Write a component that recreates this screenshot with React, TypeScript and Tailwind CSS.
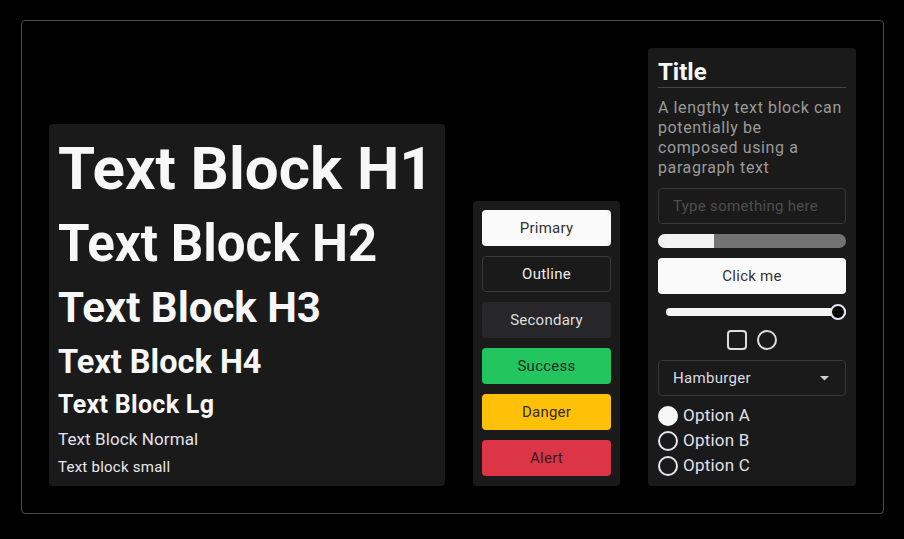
import React from 'react';

const buttons = [
  { label: 'Primary', cls: 'bg-[#fafafa] text-[#333333]' },
  { label: 'Outline', cls: 'bg-[#1a1a1a] text-[#ececec] border border-[#3a3a3a]' },
  { label: 'Secondary', cls: 'bg-[#27272a] text-[#dedede]' },
  { label: 'Success', cls: 'bg-[#22c55e] text-[#1d2b22]' },
  { label: 'Danger', cls: 'bg-[#ffc107] text-[#332b14]' },
  { label: 'Alert', cls: 'bg-[#dc3545] text-[#3a1a1f]' },
];

const options = ['Option A', 'Option B', 'Option C'];

const App: React.FC = () => {
  return (
    <div className="w-[904px] h-[539px] bg-black pl-[21px] pt-[20px] font-['Roboto',sans-serif]">
      <div className="w-[863px] h-[494px] border border-[#4a4a4a] rounded-[4px] p-[27px] flex items-end gap-7">
        {/* typography */}
        <div className="w-[396px] bg-[#1a1a1a] rounded-[4px] px-[9px] pt-[9px] pb-[10px] flex flex-col gap-[9px] text-[#f7f7f7] leading-[1.2]">
          <div className="text-[60px] font-bold">Text Block H1</div>
          <div className="text-[51px] leading-[60px] font-bold">Text Block H2</div>
          <div className="text-[42px] font-bold">Text Block H3</div>
          <div className="text-[32.5px] leading-[38px] font-bold">Text Block H4</div>
          <div className="text-[25px] leading-[30px] font-bold tracking-[0.3px]">Text Block Lg</div>
          <div className="text-[17px] text-[#e2e2ea] tracking-[0.1px]">Text Block Normal</div>
          <div className="text-[15px] text-[#e8e8ee] tracking-[0.25px]">Text block small</div>
        </div>

        {/* buttons */}
        <div className="w-[147px] bg-[#1a1a1a] rounded-[4px] px-[9px] pt-[9px] pb-[10px] flex flex-col gap-[10px]">
          {buttons.map((b) => (
            <button
              key={b.label}
              className={`h-[36px] rounded-[4px] text-[15px] tracking-[0.25px] flex items-center justify-center ${b.cls}`}
            >
              {b.label}
            </button>
          ))}
        </div>

        {/* form card */}
        <div className="w-[208px] bg-[#1a1a1a] rounded-[4px] p-[10px] flex flex-col gap-[10px]">
          <div className="h-[30px] leading-[29px] text-[24px] font-bold text-[#f7f7f7] border-b border-[#464646]">Title</div>
          <p className="text-[16px] leading-[20px] tracking-[0.6px] text-[#9a9a9a]">
            A lengthy text block can potentially be composed using a paragraph text
          </p>
          <input
            className="h-[36px] w-full rounded-[4px] border border-[#383838] bg-transparent px-[14px] text-[15px] tracking-[0.3px] text-[#dddddd] placeholder:text-[#4e4e4e] outline-none"
            placeholder="Type something here"
          />
          <div className="h-[14px] rounded-full bg-[#737373] overflow-hidden">
            <div className="h-full bg-[#f2f2f2]" style={{ width: '30%' }} />
          </div>
          <button className="h-[36px] rounded-[4px] bg-[#fafafa] text-[#333333] text-[15px] tracking-[0.25px]">Click me</button>
          <div className="h-[16px] relative flex items-center pl-[8px]">
            <div className="h-[8px] w-full rounded-full bg-[#f5f5f5]" />
            <div className="absolute right-0 top-0 w-[16px] h-[16px] rounded-full bg-black border-2 border-[#e4e4f2]" />
          </div>
          <div className="h-[20px] flex items-center justify-center gap-[10px]">
            <div className="w-[20px] h-[20px] rounded-[4px] border-2 border-[#dddddd]" />
            <div className="w-[20px] h-[20px] rounded-full border-2 border-[#dddddd]" />
          </div>
          <div className="h-[36px] rounded-[4px] border border-[#383838] pl-[14px] pr-[16px] flex items-center justify-between">
            <span className="text-[15px] tracking-[0.3px] text-[#dcdce4]">Hamburger</span>
            <svg width="9" height="5" viewBox="0 0 9 5">
              <polygon points="0,0 9,0 4.5,4.5" fill="#cfcfcf" />
            </svg>
          </div>
          <div className="flex flex-col gap-[5px]">
            {options.map((o, i) => (
              <div key={o} className="h-[20px] flex items-center gap-[5px]">
                <div
                  className={
                    i === 0
                      ? 'w-[20px] h-[20px] rounded-full bg-[#f7f7f7] border-2 border-[#f7f7f7]'
                      : 'w-[20px] h-[20px] rounded-full border-2 border-[#e6e6ee]'
                  }
                />
                <span className="text-[17px] tracking-[0.2px] text-[#e0e0ea]">{o}</span>
              </div>
            ))}
          </div>
        </div>
      </div>
    </div>
  );
};

export default App;
